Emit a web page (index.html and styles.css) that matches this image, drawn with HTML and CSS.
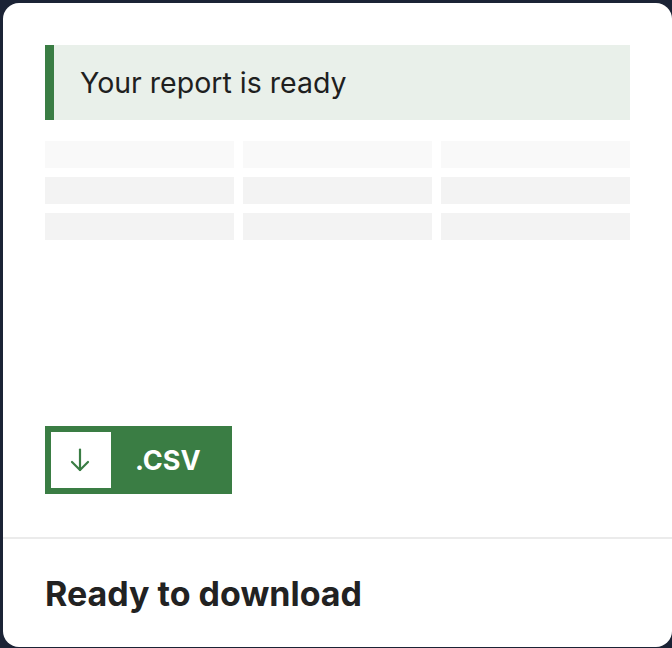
FILE: index.html
```html
<!DOCTYPE html>
<html lang="en">
<head>
  <meta charset="UTF-8">
  <meta name="viewport" content="width=device-width, initial-scale=1.0">
  <title>Report Export</title>
  <link rel="stylesheet" href="styles.css">
</head>
<body>
  <div class="card">
    <div class="card-body">
      <div class="notice">Your report is ready</div>

      <!-- Placeholder table while the preview loads -->
      <div class="skeleton">
        <span class="cell head"></span>
        <span class="cell head"></span>
        <span class="cell head"></span>
        <span class="cell"></span>
        <span class="cell"></span>
        <span class="cell"></span>
        <span class="cell"></span>
        <span class="cell"></span>
        <span class="cell"></span>
      </div>

      <button class="download-btn" type="button">
        <span class="download-icon">
          <svg width="20" height="24" viewBox="0 0 20 24" fill="none" stroke="currentColor" stroke-width="2.2" stroke-linecap="round" stroke-linejoin="round">
            <path d="M10 1.5v20.5"/>
            <path d="M2 14l8 8 8-8"/>
          </svg>
        </span>
        <span class="download-label">.CSV</span>
      </button>
    </div>

    <div class="card-footer">
      <h2>Ready to download</h2>
    </div>
  </div>
</body>
</html>
```

FILE: styles.css
```css
/* Global Styles */
body {
  font-family: 'Inter', 'Noto Sans', sans-serif;
  margin: 0;
  padding: 3px 0 1px 3px;
  background-color: #1b2335;
  color: #222;
}

/* Card */
.card {
  height: 644px;
  background-color: #fff;
  border-radius: 16px;
  display: flex;
  flex-direction: column;
  overflow: hidden;
}

.card-body {
  flex: 1;
  display: flex;
  flex-direction: column;
  padding: 42px 42px 43px;
}

/* Notice banner */
.notice {
  height: 75px;
  box-sizing: border-box;
  display: flex;
  align-items: center;
  padding-left: 26px;
  background-color: #e9f0ea;
  border-left: 9px solid #3a7d44;
  font-size: 28.5px;
  color: #1f1f1f;
}

/* Skeleton table */
.skeleton {
  display: grid;
  grid-template-columns: repeat(3, 1fr);
  grid-auto-rows: 27px;
  gap: 9px;
  margin-top: 21px;
}

.cell {
  background-color: #f3f3f3;
}

.cell.head {
  background-color: #f9f9f9;
}

/* Download button */
.download-btn {
  margin-top: auto;
  align-self: flex-start;
  display: flex;
  align-items: center;
  height: 68px;
  padding: 6px;
  border: none;
  background-color: #3a7d44;
  font-family: inherit;
  cursor: pointer;
}

.download-icon {
  width: 60px;
  height: 56px;
  display: flex;
  align-items: center;
  justify-content: center;
  padding-right: 3px;
  box-sizing: border-box;
  background-color: #fff;
  color: #3a7d44;
}

.download-label {
  padding: 0 25px 0 24px;
  font-size: 27px;
  font-weight: 700;
  color: #fff;
}

/* Footer */
.card-footer {
  height: 108px;
  display: flex;
  align-items: center;
  padding: 0 42px;
  border-top: 2px solid #ebebeb;
}

.card-footer h2 {
  margin: 0;
  font-size: 34px;
  font-weight: 700;
  color: #222;
}
```
